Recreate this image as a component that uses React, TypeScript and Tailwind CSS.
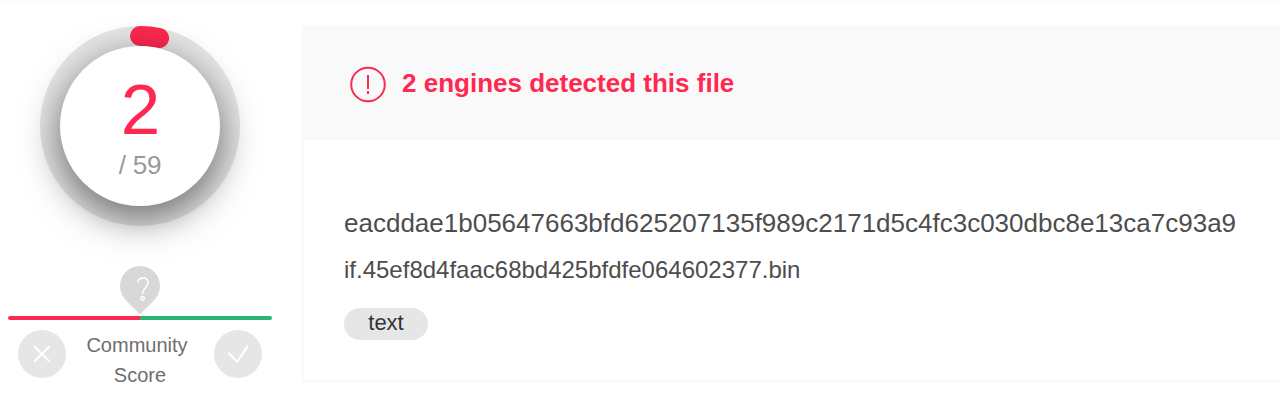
import React from "react";

function Detections() {
  return (
    <div className="relative flex size-50 items-center justify-center rounded-full bg-[#e6e6e6]">
      <svg className="absolute inset-0" width="200" height="200" viewBox="0 0 200 200" fill="none">
        <path d="M100 10A90 90 0 0 1 119.1 12.05" stroke="#ff2850" strokeWidth="20" strokeLinecap="round" />
      </svg>
      <div className="relative flex size-40 flex-col items-center rounded-full bg-white pt-[26px] shadow-[0_12px_36px_2px_rgba(0,0,0,0.5)]">
        <span className="h-[75px] text-[71px] leading-[75px] tracking-[-1px] text-[#ff2850]">2</span>
        <span className="text-[26px] leading-9 tracking-[-0.2px] text-[#999999]">/ 59</span>
      </div>
    </div>
  );
}

function CommunityScore() {
  return (
    <div className="flex w-66 flex-col items-center">
      <svg width="40" height="50" viewBox="0 0 40 50" fill="none">
        <path d="M5.86 34.14A20 20 0 1 1 34.14 34.14L20 48.3Z" fill="#d8d8d8" />
        <path d="M18 16.6C18 13.4 20 11.9 23 11.9C26 11.9 28 14 28 17C28 21.5 22.8 21.4 22.8 27.6" stroke="white" strokeWidth="1.5" strokeLinecap="round" />
        <circle cx="22.7" cy="32.3" r="1.7" stroke="white" strokeWidth="1.5" />
      </svg>
      <div className="flex h-1 w-full overflow-hidden rounded-full">
        <div className="flex-1 bg-[#ff2850]" />
        <div className="flex-1 bg-[#29b474]" />
      </div>
      <div className="mt-2.5 flex w-61 items-start justify-between">
        <svg width="48" height="48" viewBox="0 0 48 48" fill="none">
          <circle cx="24" cy="24" r="24" fill="#e6e6e6" />
          <path d="M17 17L31 31M31 17L17 31" stroke="white" strokeWidth="2" strokeLinecap="round" />
        </svg>
        <div className="flex flex-col items-center text-[20px] leading-[30px] text-[#6e6e6e]">
          <span className="pr-1.5">Community</span>
          <span>Score</span>
        </div>
        <svg width="48" height="48" viewBox="0 0 48 48" fill="none">
          <circle cx="24" cy="24" r="24" fill="#e6e6e6" />
          <path d="M15 23.2L23.2 32L33.4 16.4" stroke="white" strokeWidth="2" strokeLinecap="round" strokeLinejoin="round" />
        </svg>
      </div>
    </div>
  );
}

export default function App() {
  return (
    <div className="flex h-[412px] w-full overflow-hidden bg-white bg-[linear-gradient(#fcfcfc,#ffffff_6px)] pt-[26px] font-['Liberation_Sans',Arial,sans-serif]">
      <aside className="flex w-[302px] shrink-0 flex-col pl-2">
        <div className="flex w-66 flex-col items-center gap-10">
          <Detections />
          <CommunityScore />
        </div>
      </aside>
      <main className="h-[356px] flex-1 border-b-2 border-l-2 border-[#f9f9f9] bg-white">
        <header className="flex h-[114px] items-center gap-4 bg-[#f9f9f9] pl-[46px] text-[#ff2850]">
          <svg width="36" height="40" viewBox="0 0 36 40" fill="none" stroke="currentColor" strokeWidth="2">
            <circle cx="18" cy="21.5" r="16.8" />
            <path d="M18 12V26M18 28V31" strokeWidth="2" />
          </svg>
          <h1 className="text-[26px] leading-8 font-bold">2 engines detected this file</h1>
        </header>
        <div className="flex flex-col items-start pt-[63px] pl-10 text-[#4d4d4d]">
          <p className="text-[26px] leading-10">eacddae1b05647663bfd625207135f989c2171d5c4fc3c030dbc8e13ca7c93a9</p>
          <p className="mt-[7px] text-[24px] leading-10">if.45ef8d4faac68bd425bfdfe064602377.bin</p>
          <span className="mt-[18px] h-8 w-21 rounded-full bg-[#e6e6e6] text-center text-[22px] leading-[30px] text-[#333333]">text</span>
        </div>
      </main>
    </div>
  );
}
